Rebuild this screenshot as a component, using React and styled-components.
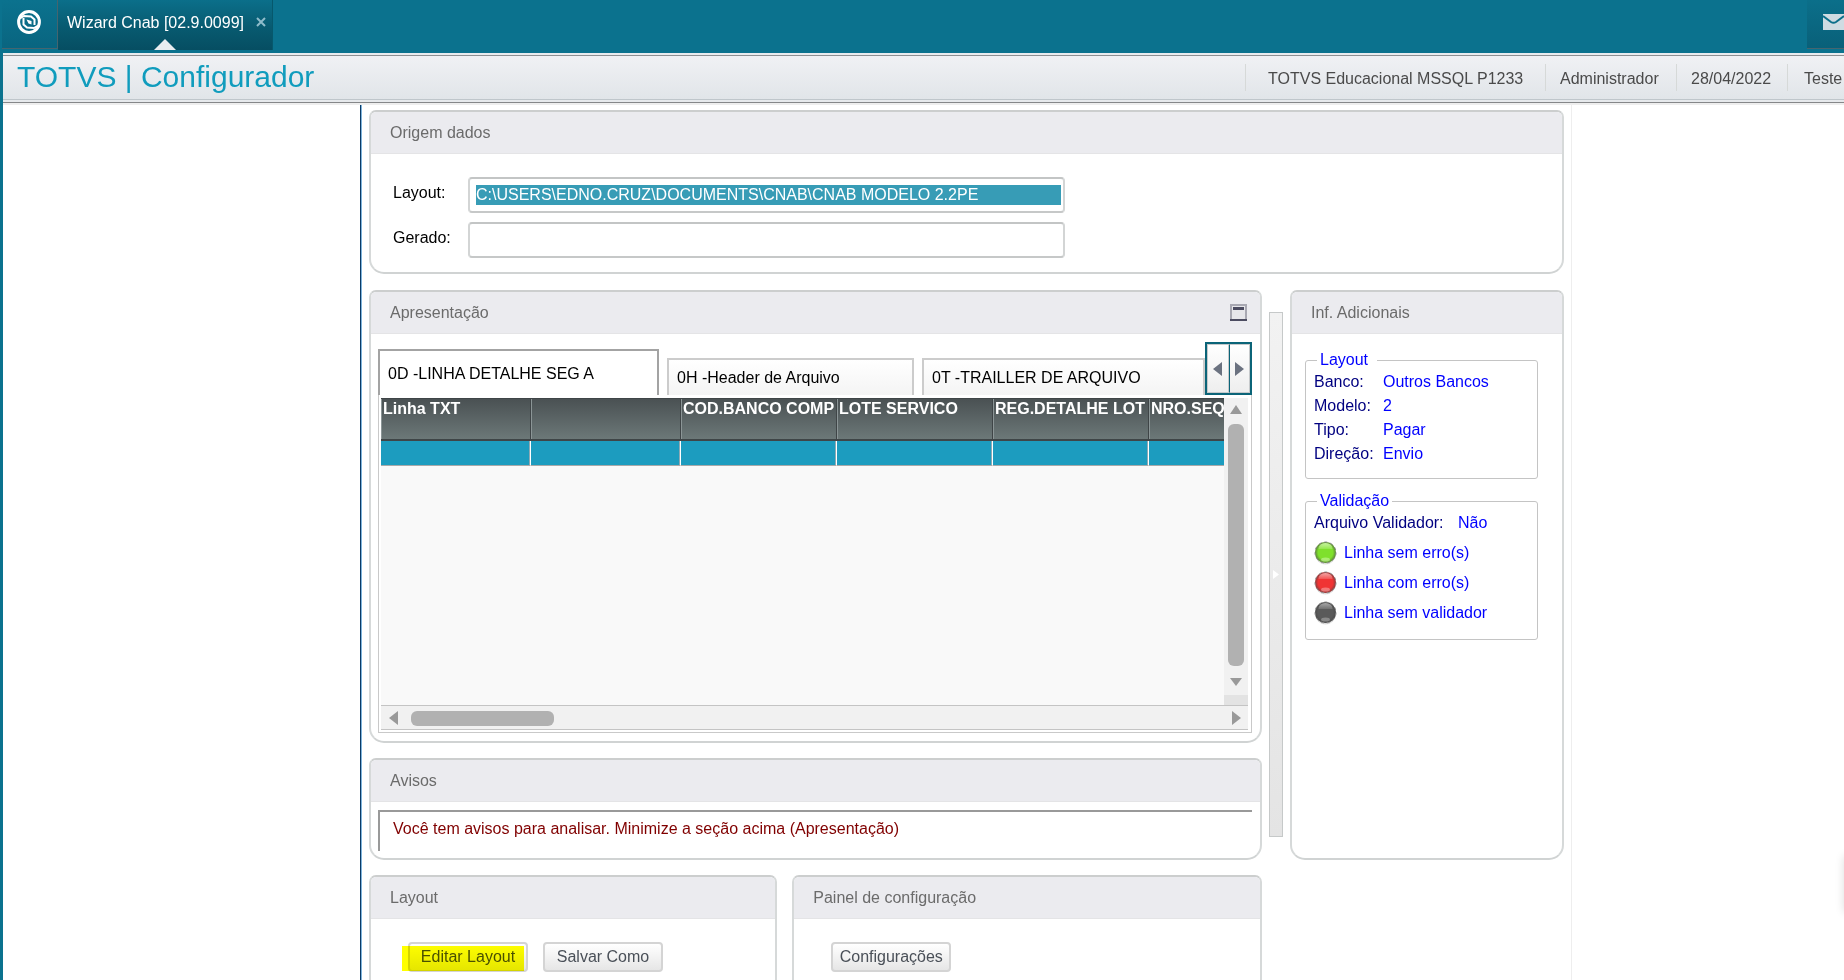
import React from "react";
import styled, { createGlobalStyle, css } from "styled-components";

const GlobalStyle = createGlobalStyle`
  * { box-sizing: border-box; }
  html, body, #root { height: 100%; }
  body {
    margin: 0;
    background: #fff;
    color: #000;
    font: 16px/20px Arial, "Liberation Sans", sans-serif;
  }
  button, input { font: inherit; }
`;

const Page = styled.div`
  position: relative;
  display: flex;
  flex-direction: column;
  height: 100vh;
  overflow: hidden;
`;

const EdgeShadow = styled.div`
  position: absolute;
  top: 856px;
  right: -10px;
  width: 10px;
  height: 56px;
  box-shadow: 0 0 10px rgba(0, 0, 0, 0.14);
`;

const TopBar = styled.header`
  display: flex;
  flex: none;
  height: 53px;
  padding-left: 2px;
  background: #0b728e;
`;

const MenuButton = styled.button`
  display: flex;
  align-items: center;
  justify-content: center;
  width: 56px;
  height: 49px;
  padding: 0 2px 4px 0;
  border: 0;
  border-right: 1px solid #45656f;
  border-bottom: 1px solid #45656f;
  background: linear-gradient(#0b728e, #096580);
`;

const AppTab = styled.div`
  position: relative;
  display: flex;
  align-items: flex-start;
  justify-content: space-between;
  width: 215px;
  height: 50px;
  padding: 13px 6px 0 9px;
  border-right: 1px solid #06586c;
  background: linear-gradient(#0b6f8a, #085a70 55%, #064e62);
  color: #fff;

  &::after {
    content: "";
    position: absolute;
    left: 50%;
    bottom: 0;
    margin-left: -11px;
    border: solid transparent;
    border-width: 0 11px 11px;
    border-bottom-color: #e9edf0;
  }
`;

const CloseButton = styled.button`
  display: flex;
  margin-top: 4px;
  padding: 0;
  border: 0;
  background: none;
`;

const MailButton = styled.button`
  width: 37px;
  height: 49px;
  margin-left: auto;
  padding: 0;
  overflow: hidden;
  border: 0;
  border-bottom: 1px solid #45656f;
  background: linear-gradient(#0b6f8a, #096079);

  svg { display: block; margin: 0 0 4px 16px; }
`;

const TitleBar = styled.div`
  display: flex;
  flex: none;
  justify-content: space-between;
  height: 52px;
  border-left: 3px solid #0b728e;
  background: linear-gradient(
    #e9ebee 0 2px, #8c8f92 2px 3px, #f0f1f4 3px, #e1e5e9 46px,
    #bfc6cb 46px 47px, #e6e9ec 47px 49px, #858789 49px 50px, #eee 50px);
`;

const Title = styled.h1`
  margin: 0;
  padding: 6px 0 0 14px;
  color: #109cbd;
  font-size: 30px;
  font-weight: 400;
  line-height: 36px;
`;

const Session = styled.ul`
  display: flex;
  margin: 11px 0 0;
  padding: 0;
  list-style: none;
`;

const SessionItem = styled.li`
  width: ${(p) => p.$width};
  height: 27px;
  padding: 5px 0 0 14px;
  border-left: 1px solid #d6d9d8;
  color: #4a4a4a;
  white-space: nowrap;

  &:first-child { padding-left: 22px; }
  &:last-child { padding-left: 16px; }
`;

const Desktop = styled.div`
  display: flex;
  flex: 1;
  justify-content: center;
  min-height: 0;
  padding-right: 272px;
  padding-left: 357px;
  border-left: 3px solid #0b728e;
`;

const Workspace = styled.main`
  display: flex;
  flex: 1;
  flex-direction: column;
  gap: 16px;
  min-width: 0;
  padding: 5px 7px 0 8px;
  border-right: 1px solid #eee;
  border-left: 1px solid #0a3a66;
  box-shadow: inset 1px 0 #7fb4dc;
`;

const Columns = styled.div`
  display: flex;
  flex: none;
`;

const MainColumn = styled.div`
  display: flex;
  flex: 1;
  flex-direction: column;
  gap: 15px;
  min-width: 0;
`;

const Panel = styled.section`
  flex: ${(p) => p.$grow || "none"};
  min-width: 0;
  overflow: hidden;
  border: 2px solid #c9cccc;
  border-color: #cccece #d6d9d9 #d0d3d3 #d6d9d9;
  border-radius: 7px 7px 15px 15px;
  background: #fff;
`;

const PanelHeader = styled.header`
  display: flex;
  align-items: center;
  justify-content: space-between;
  height: 42px;
  padding: 0 13px 0 19px;
  border-bottom: 1px solid #e4e4e6;
  background: #ebebef;
`;

const PanelTitle = styled.h2`
  margin: 0;
  color: #6b6b6b;
  font-size: 16px;
  font-weight: 400;
`;

const IconButton = styled.button`
  display: flex;
  padding: 0;
  border: 0;
  background: none;
`;

const Form = styled.form`
  display: grid;
  grid-template-columns: 75px 597px;
  row-gap: 9px;
  padding: 23px 0 14px 22px;
`;

const FieldLabel = styled.label`
  padding-top: 6px;
`;

const TextBox = styled.div`
  height: 36px;
  padding: 6px 2px 6px 6px;
  border: 2px solid #ccc;
  border-color: #c3c5c5 #d3d5d5 #c6c8c8;
  border-radius: 4px;
`;

const TextInput = styled.input`
  display: block;
  width: 100%;
  height: 20px;
  padding: 0;
  border: 0;
  outline: 0;
  background: ${(p) => (p.$selected ? "#379cb6" : "transparent")};
  color: ${(p) => (p.$selected ? "#fff" : "#000")};
`;

const TabArea = styled.div`
  padding: 8px 8px 8px 7px;
`;

const TabStrip = styled.div`
  display: flex;
  align-items: flex-end;
`;

const TabList = styled.div`
  display: flex;
  flex: 1;
  align-items: flex-end;
  gap: 8px;
  min-width: 0;
`;

const Tab = styled.button`
  flex: ${(p) => p.$flex};
  height: 37px;
  padding: 0 0 0 8px;
  overflow: hidden;
  border: 2px solid #ccc;
  border-bottom: 0;
  background: linear-gradient(#fff, #f4f4f4);
  color: #000;
  text-align: left;
  white-space: nowrap;

  ${(p) => p.$active && css`
    height: 46px;
    padding-top: 2px;
    border-color: #a3a3a3;
    background: #fff;
  `}
`;

const TabArrows = styled.div`
  display: flex;
  width: 47px;
  height: 53px;
  border: 2px solid #0b6478;
`;

const TabArrow = styled.button`
  display: flex;
  flex: 1;
  align-items: center;
  justify-content: center;
  padding: 0;
  border: 1px solid #c6c9cb;
  background: linear-gradient(#fff, #eee);

  & + & { border-left: 1px solid #0b6478; }
`;

const GridFrame = styled.div`
  padding: 3px 3px 2px 2px;
  border: 1px solid #c9c9c9;
  border-top: 0;
`;

const GridBody = styled.div`
  display: flex;
  height: 307px;
`;

const GridView = styled.div`
  flex: 1;
  min-width: 0;
  overflow: hidden;
  background: #f9f9f9;
`;

const Grid = styled.table`
  width: 930px;
  table-layout: fixed;
  border-collapse: separate;
  border-spacing: 0;
`;

const ColumnHead = styled.th`
  width: ${(p) => p.$width};
  height: 43px;
  padding: 0 0 0 2px;
  overflow: hidden;
  border: solid #3f4547;
  border-width: 1px 1px 2px 0;
  box-shadow: inset 1px 0 #8b9596;
  background: linear-gradient(#4a5153, #6c7878);
  color: #fff;
  text-align: left;
  vertical-align: top;
  white-space: nowrap;
`;

const Cell = styled.td`
  height: 25px;
  padding: 0;
  border-right: 1px solid #fff;
  border-bottom: 1px solid #a9a9a9;
  background: #1c9cbf;
  box-shadow: inset -1px 0 #8fa9b3;
`;

const VerticalScroll = styled.div`
  display: flex;
  flex-direction: column;
  align-items: center;
  width: 24px;
  padding-top: 7px;
  background: #f1f1f1;

  &::after {
    content: "";
    width: 100%;
    height: 10px;
    margin-top: auto;
    background: #e3e3e3;
  }
`;

const HorizontalScroll = styled.div`
  display: flex;
  align-items: center;
  justify-content: space-between;
  height: 25px;
  padding: 1px 7px 0 8px;
  border: solid #c4c4c4;
  border-width: 1px 0;
  background: #f1f1f1;
`;

const ScrollStart = styled.div`
  display: flex;
  align-items: center;
  gap: 13px;
`;

const Thumb = styled.div`
  width: ${(p) => p.$width};
  height: ${(p) => p.$height};
  margin: ${(p) => p.$margin || 0};
  border-radius: 6px;
  background: #b1b1b1;
`;

const Notice = styled.p`
  height: 41px;
  margin: 8px 8px 7px 7px;
  padding: 7px 13px;
  border: solid #999;
  border-width: 2px 0 0 2px;
  color: #800000;
`;

const Splitter = styled.div`
  display: flex;
  flex: none;
  align-items: center;
  justify-content: center;
  width: 14px;
  margin: 22px 7px 23px;
  border: 1px solid #c6c9c9;
  background: linear-gradient(#f2f2f2, #e4e4e4);
`;

const Side = styled(Panel)`
  width: 274px;
`;

const Group = styled.fieldset`
  width: 233px;
  height: ${(p) => p.$height};
  margin: ${(p) => p.$margin};
  padding: 0 0 0 8px;
  border: 1px solid #c4c4c4;
  border-radius: 3px;
  color: #00f;
`;

const Legend = styled.legend`
  width: ${(p) => p.$width};
  margin-left: 3px;
  padding: 0 3px;
`;

const Facts = styled.dl`
  display: grid;
  grid-template-columns: ${(p) => p.$labels} 1fr;
  margin: 0;
  line-height: 24px;
  white-space: nowrap;
`;

const Term = styled.dt`
  color: #000080;
`;

const Value = styled.dd`
  margin: 0;
`;

const Legends = styled.ul`
  margin: 3px 0 0;
  padding: 0;
  list-style: none;
`;

const LegendRow = styled.li`
  display: flex;
  align-items: center;
  gap: 7px;
  height: 30px;
`;

const BottomRow = styled.div`
  display: flex;
  flex: 1;
  gap: 15px;
`;

const Actions = styled.div`
  display: flex;
  gap: 15px;
  padding: 23px 37px;
`;

const ActionButton = styled.button`
  position: relative;
  width: 120px;
  height: 30px;
  padding: 0;
  border: 2px solid #d4d4d4;
  border-radius: 4px;
  background: linear-gradient(#fff, #e6e6e6);
  color: #4a5058;

  ${(p) => p.$marked && css`
    &::after {
      content: "";
      position: absolute;
      inset: 2px 2px -1px -8px;
      background: #ff0;
      mix-blend-mode: multiply;
    }
  `}
`;

const tabs = [
  { text: "0D -LINHA DETALHE SEG A", flex: "0 0 281px", active: true },
  { text: "0H -Header de Arquivo", flex: "0 0 247px" },
  { text: "0T -TRAILLER DE ARQUIVO", flex: "1" },
];

const columns = [
  ["Linha TXT", "150px"],
  ["", "150px"],
  ["COD.BANCO COMP", "156px"],
  ["LOTE SERVICO", "156px"],
  ["REG.DETALHE LOT", "156px"],
  ["NRO.SEQ", "162px"],
];

const facts = [
  ["Banco:", "Outros Bancos"],
  ["Modelo:", "2"],
  ["Tipo:", "Pagar"],
  ["Direção:", "Envio"],
];

const statuses = [
  ["green", "#7fe02c", "#c9f7a0", "Linha sem erro(s)"],
  ["red", "#f03434", "#f6a5a5", "Linha com erro(s)"],
  ["gray", "#5a5a5a", "#a8a8a8", "Linha sem validador"],
];

const arrowPaths = {
  left: "M9 0 0 7 9 14Z",
  right: "M0 0 9 7 0 14Z",
  up: "M0 9 6 0 12 9Z",
  down: "M0 0 6 8 12 0Z",
};

function Arrow({ to, color = "#999" }) {
  const flat = to === "up" || to === "down";
  return (
    <svg width={flat ? 12 : 9} height={flat ? 9 : 14} viewBox={flat ? "0 0 12 9" : "0 0 9 14"} fill={color} aria-hidden="true">
      <path d={arrowPaths[to]} />
    </svg>
  );
}

function Led({ id, color, shine }) {
  return (
    <svg width="23" height="24" viewBox="0 0 23 24" aria-hidden="true">
      <defs>
        <linearGradient id={`led-${id}`} x2="0" y2="1">
          <stop offset="0" stopColor={shine} />
          <stop offset=".5" stopColor={shine} stopOpacity=".35" />
          <stop offset=".55" stopColor={color} stopOpacity="0" />
        </linearGradient>
        <radialGradient id={`rim-${id}`}>
          <stop offset=".7" stopColor="#444" stopOpacity="0" />
          <stop offset="1" stopColor="#444" stopOpacity=".6" />
        </radialGradient>
      </defs>
      <circle cx="11.5" cy="13" r="10.5" fill="#ddd" />
      <circle cx="11.5" cy="11.5" r="10.5" fill={color} />
      <circle cx="11.5" cy="11.5" r="10.5" fill={`url(#rim-${id})`} />
      <circle cx="11.5" cy="11.5" r="10.5" fill="none" stroke="#888" strokeWidth="1" strokeDasharray="3 3" />
      <ellipse cx="11.5" cy="7.5" rx="7" ry="5.5" fill={`url(#led-${id})`} />
      <ellipse cx="11.5" cy="18.5" rx="4.5" ry="2" fill={shine} opacity=".6" />
    </svg>
  );
}

export default function App() {
  return (
    <Page>
      <GlobalStyle />
      <TopBar>
        <MenuButton aria-label="Menu">
          <svg width="24" height="24" viewBox="0 0 24 24" fill="none" stroke="#fff">
            <circle cx="12" cy="12" r="10.4" strokeWidth="3" />
            <path d="M2 9 7 6 14 6.5 17.5 9.5 17.5 15" strokeWidth="2" />
            <path d="M22 15 17 18 10 17.5 6.5 14.5 6.5 8" strokeWidth="2" />
            <path d="M9.5 9.5 14.5 11 14.5 14.5 11.5 13.5Z" fill="#fff" stroke="none" />
          </svg>
        </MenuButton>
        <AppTab>
          <span>Wizard Cnab [02.9.0099]</span>
          <CloseButton aria-label="Fechar">
            <svg width="10" height="10" stroke="#8fbccb" strokeWidth="2">
              <path d="M1 1 9 9M9 1 1 9" />
            </svg>
          </CloseButton>
        </AppTab>
        <MailButton aria-label="Mensagens">
          <svg width="24" height="16" viewBox="0 0 24 16">
            <rect width="24" height="16" fill="#cfdbe2" />
            <path d="M0 2 8 8Q10.500 9.500 13 8L21 2" fill="none" stroke="#0b6f8a" strokeWidth="2" />
          </svg>
        </MailButton>
      </TopBar>
      <TitleBar>
        <Title>TOTVS | Configurador</Title>
        <Session>
          <SessionItem $width="300px">TOTVS Educacional MSSQL P1233</SessionItem>
          <SessionItem $width="131px">Administrador</SessionItem>
          <SessionItem $width="111px">28/04/2022</SessionItem>
          <SessionItem $width="57px">Teste</SessionItem>
        </Session>
      </TitleBar>
      <Desktop>
        <Workspace>
          <Panel>
            <PanelHeader><PanelTitle>Origem dados</PanelTitle></PanelHeader>
            <Form>
              <FieldLabel htmlFor="layout">Layout:</FieldLabel>
              <TextBox>
                <TextInput id="layout" $selected defaultValue="C:\USERS\EDNO.CRUZ\DOCUMENTS\CNAB\CNAB MODELO 2.2PE" />
              </TextBox>
              <FieldLabel htmlFor="gerado">Gerado:</FieldLabel>
              <TextBox><TextInput id="gerado" /></TextBox>
            </Form>
          </Panel>
          <Columns>
            <MainColumn>
              <Panel>
                <PanelHeader>
                  <PanelTitle>Apresentação</PanelTitle>
                  <IconButton aria-label="Minimizar">
                    <svg width="17" height="17">
                      <rect x="1" y="1" width="15" height="15" fill="#e6e6ea" stroke="#a8a8b2" strokeWidth="2" />
                      <path d="M0 16H17" stroke="#4b4b60" strokeWidth="2" />
                      <path d="M3 4.5H14" stroke="#4b4b60" strokeWidth="3" />
                    </svg>
                  </IconButton>
                </PanelHeader>
                <TabArea>
                  <TabStrip>
                    <TabList role="tablist">
                      {tabs.map((t) => (
                        <Tab key={t.text} role="tab" aria-selected={!!t.active} $flex={t.flex} $active={t.active}>
                          {t.text}
                        </Tab>
                      ))}
                    </TabList>
                    <TabArrows>
                      <TabArrow aria-label="Anterior"><Arrow to="left" color="#6b7280" /></TabArrow>
                      <TabArrow aria-label="Próxima"><Arrow to="right" color="#6b7280" /></TabArrow>
                    </TabArrows>
                  </TabStrip>
                  <GridFrame>
                    <GridBody>
                      <GridView>
                        <Grid>
                          <thead>
                            <tr>{columns.map(([name, width]) => <ColumnHead key={name} $width={width}>{name}</ColumnHead>)}</tr>
                          </thead>
                          <tbody>
                            <tr>{columns.map(([name]) => <Cell key={name} />)}</tr>
                          </tbody>
                        </Grid>
                      </GridView>
                      <VerticalScroll>
                        <Arrow to="up" />
                        <Thumb $width="16px" $height="242px" $margin="10px 0 12px" />
                        <Arrow to="down" />
                      </VerticalScroll>
                    </GridBody>
                    <HorizontalScroll>
                      <ScrollStart>
                        <Arrow to="left" />
                        <Thumb $width="143px" $height="15px" />
                      </ScrollStart>
                      <Arrow to="right" />
                    </HorizontalScroll>
                  </GridFrame>
                </TabArea>
              </Panel>
              <Panel>
                <PanelHeader><PanelTitle>Avisos</PanelTitle></PanelHeader>
                <Notice>Você tem avisos para analisar. Minimize a seção acima (Apresentação)</Notice>
              </Panel>
              <BottomRow>
                <Panel $grow="408 1 0">
                  <PanelHeader><PanelTitle>Layout</PanelTitle></PanelHeader>
                  <Actions>
                    <ActionButton $marked>Editar Layout</ActionButton>
                    <ActionButton>Salvar Como</ActionButton>
                  </Actions>
                </Panel>
                <Panel $grow="470 1 0">
                  <PanelHeader><PanelTitle>Painel de configuração</PanelTitle></PanelHeader>
                  <Actions><ActionButton>Configurações</ActionButton></Actions>
                </Panel>
              </BottomRow>
            </MainColumn>
            <SideColumns />
          </Columns>
        </Workspace>
      </Desktop>
      <EdgeShadow />
    </Page>
  );
}

const SideWrap = styled.aside`
  display: flex;
  flex: none;
  align-self: flex-start;
  height: 570px;
`;

function SideColumns() {
  return (
    <SideWrap>
      <Splitter>
        <svg width="6" height="9" fill="#fff" aria-hidden="true"><path d="M0 0 6 4.5 0 9Z" /></svg>
      </Splitter>
      <Side>
        <PanelHeader><PanelTitle>Inf. Adicionais</PanelTitle></PanelHeader>
        <Group $height="129px" $margin="16px 0 0 13px">
          <Legend $width="60px">Layout</Legend>
          <Facts $labels="69px">
            {facts.map(([term, value]) => (
              <React.Fragment key={term}><Term>{term}</Term><Value>{value}</Value></React.Fragment>
            ))}
          </Facts>
        </Group>
        <Group $height="149px" $margin="12px 0 0 13px">
          <Legend>Validação</Legend>
          <Facts $labels="144px"><Term>Arquivo Validador:</Term><Value>Não</Value></Facts>
          <Legends>
            {statuses.map(([id, color, shine, text]) => (
              <LegendRow key={id}><Led id={id} color={color} shine={shine} />{text}</LegendRow>
            ))}
          </Legends>
        </Group>
      </Side>
    </SideWrap>
  );
}
